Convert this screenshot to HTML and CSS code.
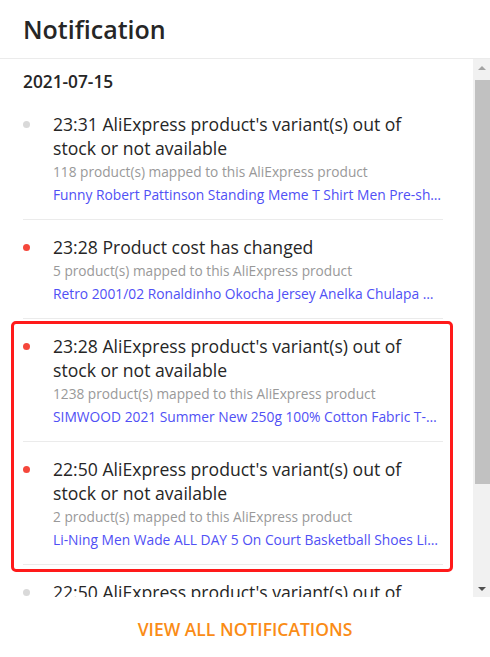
FILE: index.html
```html
<!DOCTYPE html>
<html lang="en">
<head>
    <meta charset="UTF-8">
    <meta name="viewport" content="width=device-width, initial-scale=1.0">
    <title>Notification</title>
    <link rel="stylesheet" href="styles.css">
</head>
<body>
    <div class="panel">
        <div class="panel-head">
            <h2 class="panel-title">Notification</h2>
        </div>
        <div class="panel-body">
            <div class="list">
                <div class="date">2021-07-15</div>
                <div class="item read">
                    <span class="dot"></span>
                    <div class="item-text">
                        <div class="item-title">23:31 AliExpress product's variant(s) out of stock or not available</div>
                        <div class="item-sub">118 product(s) mapped to this AliExpress product</div>
                        <a class="item-link" href="#">Funny Robert Pattinson Standing Meme T Shirt Men Pre-shrunk Cotton Short Sleeve Tee</a>
                    </div>
                </div>
                <div class="item">
                    <span class="dot"></span>
                    <div class="item-text">
                        <div class="item-title">23:28 Product cost has changed</div>
                        <div class="item-sub">5 product(s) mapped to this AliExpress product</div>
                        <a class="item-link" href="#">Retro 2001/02 Ronaldinho Okocha Jersey Anelka Chulapa Djorkaeff Shirt</a>
                    </div>
                </div>
                <div class="highlight">
                    <div class="item">
                        <span class="dot"></span>
                        <div class="item-text">
                            <div class="item-title">23:28 AliExpress product's variant(s) out of stock or not available</div>
                            <div class="item-sub">1238 product(s) mapped to this AliExpress product</div>
                            <a class="item-link" href="#">SIMWOOD 2021 Summer New 250g 100% Cotton Fabric T-shirt Men</a>
                        </div>
                    </div>
                    <div class="item">
                        <span class="dot"></span>
                        <div class="item-text">
                            <div class="item-title">22:50 AliExpress product's variant(s) out of stock or not available</div>
                            <div class="item-sub">2 product(s) mapped to this AliExpress product</div>
                            <a class="item-link" href="#">Li-Ning Men Wade ALL DAY 5 On Court Basketball Shoes Lining Sneakers</a>
                        </div>
                    </div>
                </div>
                <div class="item read">
                    <span class="dot"></span>
                    <div class="item-text">
                        <div class="item-title">22:50 AliExpress product's variant(s) out of stock or not available</div>
                        <div class="item-sub">3 product(s) mapped to this AliExpress product</div>
                        <a class="item-link" href="#">Summer Casual Shorts Men Cotton</a>
                    </div>
                </div>
            </div>
            <div class="scrollbar">
                <span class="arrow up"></span>
                <div class="track">
                    <div class="thumb"></div>
                </div>
                <span class="arrow down"></span>
            </div>
        </div>
        <div class="panel-foot">
            <a class="view-all" href="#">VIEW ALL NOTIFICATIONS</a>
        </div>
    </div>
</body>
</html>
```

FILE: styles.css
```css
body {
    margin: 0;
    font-family: "Open Sans", Arial, sans-serif;
    color: #262626;
    background: #fff;
}

.panel {
    width: 490px;
    height: 657px;
    display: flex;
    flex-direction: column;
}

.panel-head {
    height: 58px;
    padding: 0 23px;
    border-bottom: 1px solid #ebebeb;
    display: flex;
    align-items: center;
}

.panel-title {
    margin: 0;
    font-size: 25px;
    font-weight: 600;
    line-height: 32px;
}

.panel-body {
    display: flex;
    height: 538px;
}

.list {
    flex: 1;
    min-width: 0;
    overflow: hidden;
    padding: 0 30px 0 23px;
}

.date {
    padding-top: 12px;
    margin-bottom: 4px;
    font-size: 17.3px;
    font-weight: 600;
    line-height: 22px;
}

.item {
    display: flex;
    padding: 15px 0 13px;
    border-bottom: 1px solid #ebebeb;
}

.dot {
    width: 7px;
    height: 7px;
    margin: 9px 23px 0 0;
    border-radius: 50%;
    background: #f5473b;
    flex-shrink: 0;
}

.item.read .dot {
    background: #d9d9d9;
}

.item-text {
    flex: 1;
    min-width: 0;
}

.item-title {
    font-size: 17.6px;
    line-height: 24px;
    color: #262626;
}

.item-sub {
    font-size: 13.7px;
    line-height: 23px;
    color: #999;
}

.item-link {
    display: block;
    font-size: 13.8px;
    line-height: 23px;
    color: #5050f5;
    text-decoration: none;
    white-space: nowrap;
    overflow: hidden;
    text-overflow: ellipsis;
}

.highlight {
    position: relative;
}

.highlight::after {
    content: "";
    position: absolute;
    top: 2px;
    left: -12px;
    right: -10px;
    bottom: -7px;
    border: 3px solid #ff1a1a;
    border-radius: 5px;
    pointer-events: none;
}

.scrollbar {
    width: 17px;
    background: #f1f1f1;
    display: flex;
    flex-direction: column;
}

.arrow {
    height: 17px;
    display: flex;
    align-items: center;
    justify-content: center;
}

.arrow::before {
    content: "";
    border-left: 4px solid transparent;
    border-right: 4px solid transparent;
}

.arrow.up::before {
    border-bottom: 4px solid #a3a3a3;
}

.arrow.down::before {
    border-top: 4px solid #505050;
}

.track {
    flex: 1;
    padding-top: 4px;
}

.thumb {
    height: 404px;
    margin-left: 2px;
    background: #c1c1c1;
}

.panel-foot {
    flex: 1;
    display: flex;
    align-items: center;
    justify-content: center;
    padding-top: 4px;
}

.view-all {
    font-size: 17.5px;
    font-weight: 600;
    color: #fa8c16;
    text-decoration: none;
}
```
